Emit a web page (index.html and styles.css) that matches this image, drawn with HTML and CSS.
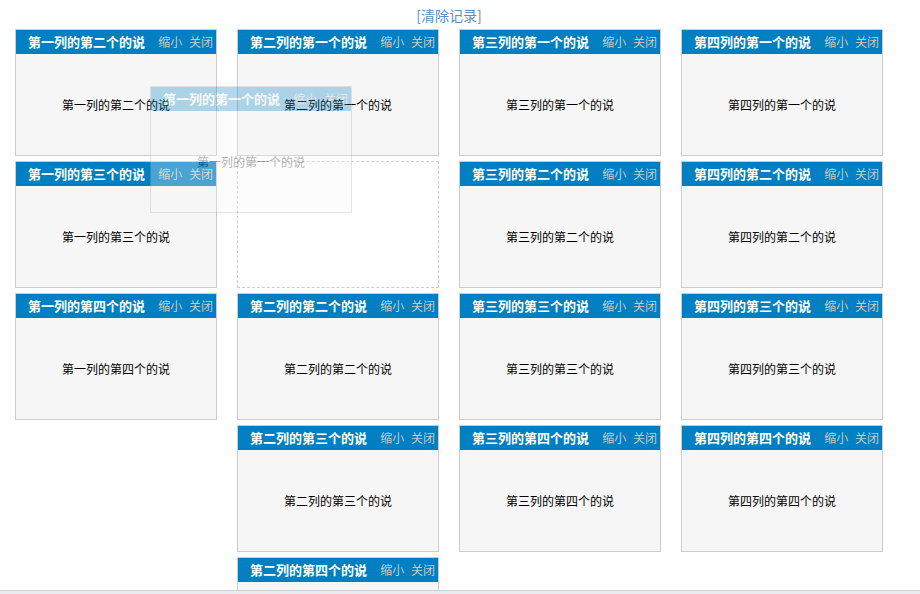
FILE: index.html
```
<!DOCTYPE html>
<html>
	<head>
		<meta charset="UTF-8">
		<title>拖拽面板</title>
		<link rel="stylesheet" href="styles.css">
	</head>
	<body>
		<div id="wrap">
			<div class="top"><a href="javascript:;" id="clear">[清除记录]</a></div>
			<div class="cols">
				<div class="col">
					<div class="panel">
						<div class="hd"><span class="opt">缩小 关闭</span><h3>第一列的第二个的说</h3></div>
						<div class="bd">第一列的第二个的说</div>
					</div>
					<div class="panel">
						<div class="hd"><span class="opt">缩小 关闭</span><h3>第一列的第三个的说</h3></div>
						<div class="bd">第一列的第三个的说</div>
					</div>
					<div class="panel">
						<div class="hd"><span class="opt">缩小 关闭</span><h3>第一列的第四个的说</h3></div>
						<div class="bd">第一列的第四个的说</div>
					</div>
				</div>
				<div class="col">
					<div class="panel">
						<div class="hd"><span class="opt">缩小 关闭</span><h3>第二列的第一个的说</h3></div>
						<div class="bd">第二列的第一个的说</div>
					</div>
					<div class="place"></div>
					<div class="panel">
						<div class="hd"><span class="opt">缩小 关闭</span><h3>第二列的第二个的说</h3></div>
						<div class="bd">第二列的第二个的说</div>
					</div>
					<div class="panel">
						<div class="hd"><span class="opt">缩小 关闭</span><h3>第二列的第三个的说</h3></div>
						<div class="bd">第二列的第三个的说</div>
					</div>
					<div class="panel">
						<div class="hd"><span class="opt">缩小 关闭</span><h3>第二列的第四个的说</h3></div>
						<div class="bd">第二列的第四个的说</div>
					</div>
				</div>
				<div class="col">
					<div class="panel">
						<div class="hd"><span class="opt">缩小 关闭</span><h3>第三列的第一个的说</h3></div>
						<div class="bd">第三列的第一个的说</div>
					</div>
					<div class="panel">
						<div class="hd"><span class="opt">缩小 关闭</span><h3>第三列的第二个的说</h3></div>
						<div class="bd">第三列的第二个的说</div>
					</div>
					<div class="panel">
						<div class="hd"><span class="opt">缩小 关闭</span><h3>第三列的第三个的说</h3></div>
						<div class="bd">第三列的第三个的说</div>
					</div>
					<div class="panel">
						<div class="hd"><span class="opt">缩小 关闭</span><h3>第三列的第四个的说</h3></div>
						<div class="bd">第三列的第四个的说</div>
					</div>
				</div>
				<div class="col">
					<div class="panel">
						<div class="hd"><span class="opt">缩小 关闭</span><h3>第四列的第一个的说</h3></div>
						<div class="bd">第四列的第一个的说</div>
					</div>
					<div class="panel">
						<div class="hd"><span class="opt">缩小 关闭</span><h3>第四列的第二个的说</h3></div>
						<div class="bd">第四列的第二个的说</div>
					</div>
					<div class="panel">
						<div class="hd"><span class="opt">缩小 关闭</span><h3>第四列的第三个的说</h3></div>
						<div class="bd">第四列的第三个的说</div>
					</div>
					<div class="panel">
						<div class="hd"><span class="opt">缩小 关闭</span><h3>第四列的第四个的说</h3></div>
						<div class="bd">第四列的第四个的说</div>
					</div>
				</div>
			</div>
			<!-- 正在拖动的面板 -->
			<div class="panel drag">
				<div class="hd"><span class="opt">缩小 关闭</span><h3>第一列的第一个的说</h3></div>
				<div class="bd">第一列的第一个的说</div>
			</div>
		</div>
		<div id="bar"></div>
	</body>
</html>
```

FILE: styles.css
```
*{margin:0;padding:0;}
body{
	font-family: "Noto Sans CJK SC", "Liberation Sans", sans-serif;
	font-size: 12px;
	color: #000;
	background: #fff;
}
#wrap{
	position: relative;
	width: 868px;
	padding: 4px 0 0 15px;
}
.top{
	height: 25px;
	line-height: 22px;
	text-align: center;
}
#clear{
	font-size: 14px;
	color: #5b8dc6;
	text-decoration: none;
}
.cols{
	display: flex;
	gap: 20px;
	align-items: flex-start;
}
.col{
	width: 202px;
}
.panel{
	width: 200px;
	border: 1px solid #ccc;
	margin-bottom: 5px;
	background: #f6f6f6;
}
.hd{
	height: 24px;
	line-height: 24px;
	background: #0080c2;
	padding: 0 3px 0 12px;
	overflow: hidden;
}
.hd h3{
	font-size: 13px;
	font-weight: bold;
	color: #fff;
	white-space: nowrap;
}
.opt{
	float: right;
	color: #c8c8c8;
	font-size: 12px;
	word-spacing: 4px;
}
.bd{
	height: 101px;
	line-height: 101px;
	text-align: center;
}
.place{
	width: 200px;
	height: 125px;
	border: 1px dashed #ccc;
	margin-bottom: 5px;
	background: #fff;
}
.drag{
	position: absolute;
	left: 150px;
	top: 86px;
	opacity: 0.3;
	border-color: #aaa;
}
#bar{
	position: fixed;
	left: 0;
	right: 0;
	bottom: 0;
	height: 3px;
	border-top: 1px solid #c9d0d6;
	background: #e9edf1;
}
```
